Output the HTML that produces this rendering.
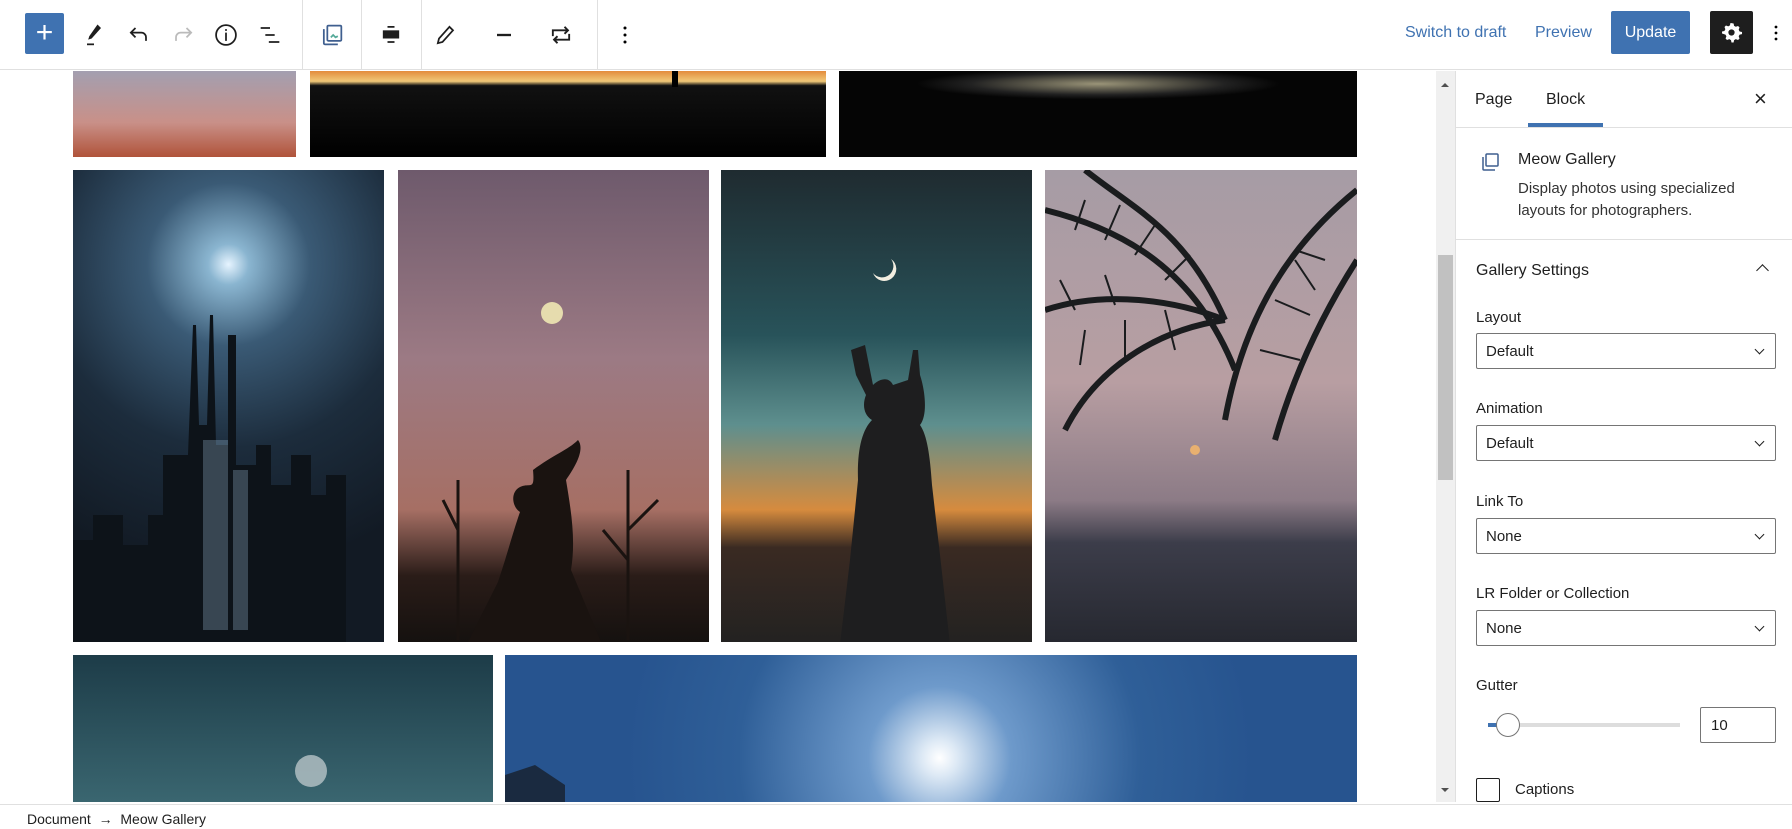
<!DOCTYPE html>
<html><head><meta charset="utf-8"><style>
*{box-sizing:border-box;margin:0;padding:0}
body{width:1792px;height:829px;overflow:hidden;background:#fff;font-family:"Liberation Sans",sans-serif;color:#1e1e1e;position:relative}
.a{position:absolute}
.top{left:0;top:0;width:1792px;height:70px;border-bottom:1px solid #e0e0e0;background:#fff}
.vd{position:absolute;top:0;width:1px;height:70px;background:#e0e0e0}
.ic{position:absolute;top:21px;width:28px;height:28px}
.img{position:absolute;overflow:hidden}
.img svg{position:absolute;left:0;top:0}
.sel{position:absolute;left:1476px;width:300px;height:36px;border:1px solid #757575;border-radius:2px;font-size:15px;padding:9px 9px}
.sel:after{content:"";position:absolute;right:12px;top:12px;width:6px;height:6px;border-right:1.5px solid #1e1e1e;border-bottom:1.5px solid #1e1e1e;transform:rotate(45deg)}
.lbl{position:absolute;left:1476px;font-size:15px}
</style></head><body>
<div class="a top"></div>
<div class="a" style="left:25px;top:13px;width:39px;height:41px;background:#3f72b1;border-radius:2px;color:#fff;font-size:30px;line-height:39px;text-align:center">+</div>
<svg class="ic" style="left:80px" viewBox="0 0 24 24"><path d="M15 3l3 3-8 9-3 1 1-3z" fill="#1e1e1e"/><path d="M6 20h6" stroke="#1e1e1e" stroke-width="1.5"/></svg>
<svg class="ic" style="left:125px" viewBox="0 0 24 24" fill="none" stroke="#1e1e1e" stroke-width="1.5"><path d="M9 6L5 10l4 4M5 10h9a4 4 0 014 4v3"/></svg>
<svg class="ic" style="left:169px" viewBox="0 0 24 24" fill="none" stroke="#bbb" stroke-width="1.5"><path d="M15 6l4 4-4 4M19 10h-9a4 4 0 00-4 4v3"/></svg>
<svg class="ic" style="left:212px" viewBox="0 0 24 24" fill="none" stroke="#1e1e1e" stroke-width="1.5"><circle cx="12" cy="12" r="8.5"/><path d="M12 10v7M12 7v1.5"/></svg>
<svg class="ic" style="left:256px" viewBox="0 0 24 24" fill="none" stroke="#1e1e1e" stroke-width="1.5"><path d="M4 6h8M8 12h8M11 18h9"/></svg>
<div class="vd" style="left:302px"></div>
<svg class="ic" style="left:318px" viewBox="0 0 24 24" fill="none" stroke="#3f5f8f" stroke-width="1.5"><rect x="8" y="4" width="12" height="13" rx="1"/><path d="M5 7v12a1 1 0 001 1h11"/><path d="M11 14l2-2 2 2 2-1" stroke="#5a9"/></svg>
<div class="vd" style="left:361px"></div>
<svg class="ic" style="left:377px" viewBox="0 0 24 24"><rect x="5" y="8" width="14" height="7" fill="#1e1e1e"/><path d="M9 5h6M9 18h6" stroke="#1e1e1e" stroke-width="1.5"/></svg>
<div class="vd" style="left:421px"></div>
<svg class="ic" style="left:432px" viewBox="0 0 24 24" fill="none" stroke="#1e1e1e" stroke-width="1.5"><path d="M15 5l3 3-9 10-4 1 1-4z"/></svg>
<svg class="ic" style="left:490px" viewBox="0 0 24 24"><path d="M6 12h12" stroke="#1e1e1e" stroke-width="2"/></svg>
<svg class="ic" style="left:547px" viewBox="0 0 24 24" fill="none" stroke="#1e1e1e" stroke-width="1.6"><path d="M5 13V8h13M15 5l3 3-3 3M19 11v5H6M9 19l-3-3 3-3"/></svg>
<div class="vd" style="left:597px"></div>
<svg class="ic" style="left:611px" viewBox="0 0 24 24"><circle cx="12" cy="6" r="1.3"/><circle cx="12" cy="12" r="1.3"/><circle cx="12" cy="18" r="1.3"/></svg>
<div class="a" style="left:1405px;top:24px;font-size:16px;color:#3f72b1">Switch to draft</div>
<div class="a" style="left:1535px;top:24px;font-size:16px;color:#3f72b1">Preview</div>
<div class="a" style="left:1611px;top:11px;width:79px;height:43px;background:#3f72b1;border-radius:2px;color:#fff;font-size:16px;line-height:43px;text-align:center">Update</div>
<div class="a" style="left:1710px;top:11px;width:43px;height:43px;background:#1e1e1e;border-radius:2px"></div>
<svg class="a" style="left:1719px;top:20px" width="25" height="25" viewBox="0 0 24 24"><path fill="#fff" d="M12 3l2 .3.5 2.3 1.6.9 2.2-.8 1.4 1.5-.8 2.2.9 1.6 2.3.5v2l-2.3.5-.9 1.6.8 2.2-1.4 1.4-2.2-.8-1.6.9-.5 2.3h-2l-.5-2.3-1.6-.9-2.2.8-1.4-1.4.8-2.2-.9-1.6L2.9 13v-2l2.3-.5.9-1.6-.8-2.2 1.4-1.4 2.2.8 1.6-.9.5-2.3zm0 6a3 3 0 100 6 3 3 0 000-6z"/></svg>
<svg class="a" style="left:1766px;top:21px" width="20" height="24" viewBox="0 0 20 24"><circle cx="10" cy="6" r="1.4"/><circle cx="10" cy="12" r="1.4"/><circle cx="10" cy="18" r="1.4"/></svg>

<!-- images -->
<div class="img" style="left:73px;top:71px;width:223px;height:86px;background:linear-gradient(#a39fb0,#c99088 60%,#b0533a)"></div>
<div class="img" style="left:310px;top:71px;width:516px;height:86px;background:linear-gradient(#e38b3c 0,#f0c878 12%,#111 17%,#000)"><svg width="516" height="86"><rect x="362" y="0" width="6" height="16" fill="#000"/></svg></div>
<div class="img" style="left:839px;top:71px;width:518px;height:86px;background:radial-gradient(ellipse 35% 18% at 50% 15%,#9a9478,#222 70%,#050505)"></div>

<div class="img" style="left:73px;top:170px;width:311px;height:472px;background:radial-gradient(circle at 50% 20%,#e6f4ff 0,#8ab5d0 5%,#3a5a75 20%,#1c2c3c 45%,#121a24 75%)">
<svg width="311" height="472"><path d="M0 472V370h20v-25h30v30h25v-30h15v-60h25l5-130h3l3 100h8l3-110h3l3 130h12v-110h8v130h20v-20h15v40h20v-30h20v40h15v-20h20V472z" fill="#0d1319"/><path d="M130 270h25v190h-25zM160 300h15v160h-15z" fill="#8aa6bc" opacity=".35"/></svg></div>

<div class="img" style="left:398px;top:170px;width:311px;height:472px;background:linear-gradient(#6e5a6c,#9c7a84 40%,#a66f64 72%,#2a1c18 86%,#15110f)">
<circle/><svg width="311" height="472"><circle cx="154" cy="143" r="11" fill="#e6dcae"/><path d="M135 300c20-15 35-20 45-30 8 10-5 30-12 40 5 30 10 60 5 90l30 72H70l30-60c10-30 15-50 22-70-8-5-10-20 0-25 10-5 15 5 13-17z" fill="#1a1310"/><path d="M230 470V300M230 360l30-30M230 390l-25-30M60 470V310M60 360l-15-30" stroke="#1a1310" stroke-width="3"/></svg></div>

<div class="img" style="left:721px;top:170px;width:311px;height:472px;background:linear-gradient(#1f2b30,#28535a 35%,#5e8f8e 54%,#d68b3e 72%,#3a2a22 80%,#232221)">
<svg width="311" height="472"><path d="M152 103a12 12 0 1018-14 10 10 0 01-18 14z" fill="#f2eee0"/><path d="M130 180l5 25 10 20c-4 10-2 20 6 25-10 10-15 30-14 60l-8 80-10 85h110l-10-90-8-70c-2-30-5-50-12-60 8-10 5-35 0-50l-2-25h-5l-5 30-15 5c-5-10-15-5-20 0l-8-40z" fill="#1e1e1f"/></svg></div>

<div class="img" style="left:1045px;top:170px;width:312px;height:472px;background:linear-gradient(#a69ca5,#b89ea2 45%,#8c7b86 70%,#3c3d4a 79%,#262830)">
<svg width="312" height="472"><circle cx="150" cy="280" r="5" fill="#e8b070"/><g stroke="#1a1c1e" stroke-width="6" fill="none"><path d="M0 40C80 60 150 100 190 200"/><path d="M0 140C60 120 130 130 180 150"/><path d="M20 260C50 200 110 160 180 150"/><path d="M312 20C250 70 200 140 180 250"/><path d="M312 90C280 140 250 200 230 270"/><path d="M40 0C90 40 140 60 180 150"/></g><g stroke="#1a1c1e" stroke-width="2"><path d="M30 60l10-30M60 70l15-35M90 85l20-30M120 110l25-25M40 160l-5 35M80 150l0 40M120 140l10 40M30 140l-15-30M70 135l-10-30M250 80l30 10M230 130l35 15M215 180l40 10M270 120l-20-30"/></g></svg></div>

<div class="img" style="left:73px;top:655px;width:420px;height:147px;background:linear-gradient(#1d3c48,#3a6670)"><svg width="420" height="147"><circle cx="238" cy="116" r="16" fill="#b8c4c8" opacity=".8"/></svg></div>
<div class="img" style="left:505px;top:655px;width:852px;height:147px;background:radial-gradient(circle at 51% 70%,#fff 0,#dde9f5 4%,#6e9acb 16%,#2f5f98 45%,#27548f 70%)"><svg width="852" height="147"><path d="M0 120l30-10 30 20v27H0z" fill="#1a2a40"/></svg></div>
<!-- scrollbar -->
<div class="a" style="left:1436px;top:71px;width:19px;height:731px;background:#f0f0f0"></div>
<div class="a" style="left:1438px;top:255px;width:15px;height:225px;background:#c1c1c1"></div>
<div class="a" style="left:1441px;top:79px;border:4px solid transparent;border-bottom:4px solid #505050"></div>
<div class="a" style="left:1441px;top:788px;border:4px solid transparent;border-top:4px solid #505050"></div>
<!-- sidebar -->
<div class="a" style="left:1455px;top:71px;width:1px;height:731px;background:#e0e0e0"></div>
<div class="a" style="left:1475px;top:91px;font-size:16px">Page</div>
<div class="a" style="left:1546px;top:91px;font-size:16px">Block</div>
<div class="a" style="left:1528px;top:123px;width:75px;height:4px;background:#3f72b1"></div>
<div class="a" style="left:1456px;top:127px;width:336px;height:1px;background:#e0e0e0"></div>
<div class="a" style="left:1754px;top:86px;font-size:22px">×</div>
<svg class="a" style="left:1478px;top:150px" width="24" height="24" viewBox="0 0 24 24" fill="none" stroke="#3f5f8f" stroke-width="1.5"><rect x="8" y="4" width="12" height="12" rx="1"/><path d="M5 7v12a1 1 0 001 1h11"/></svg>
<div class="a" style="left:1518px;top:151px;font-size:16px">Meow Gallery</div>
<div class="a" style="left:1518px;top:178px;font-size:15px;line-height:22px;color:#333">Display photos using specialized<br>layouts for photographers.</div>
<div class="a" style="left:1456px;top:239px;width:336px;height:1px;background:#e0e0e0"></div>
<div class="a" style="left:1476px;top:262px;font-size:16px">Gallery Settings</div>
<div class="a" style="left:1758px;top:266px;width:9px;height:9px;border-left:1.5px solid #1e1e1e;border-top:1.5px solid #1e1e1e;transform:rotate(45deg)"></div>
<div class="lbl" style="top:309px">Layout</div><div class="sel" style="top:333px">Default</div>
<div class="lbl" style="top:400px">Animation</div><div class="sel" style="top:425px">Default</div>
<div class="lbl" style="top:493px">Link To</div><div class="sel" style="top:518px">None</div>
<div class="lbl" style="top:585px">LR Folder or Collection</div><div class="sel" style="top:610px">None</div>
<div class="lbl" style="top:677px">Gutter</div>
<div class="a" style="left:1488px;top:723px;width:192px;height:4px;background:#ddd"></div>
<div class="a" style="left:1488px;top:723px;width:10px;height:4px;background:#3f72b1"></div>
<div class="a" style="left:1496px;top:713px;width:24px;height:24px;border-radius:50%;border:1px solid #757575;background:#fff"></div>
<div class="a" style="left:1700px;top:707px;width:76px;height:36px;border:1px solid #757575;border-radius:2px;font-size:15px;padding:9px 10px">10</div>
<div class="a" style="left:1476px;top:778px;width:24px;height:24px;border:1.5px solid #1e1e1e;border-radius:2px"></div>
<div class="lbl" style="left:1515px;top:781px">Captions</div>
<!-- footer -->
<div class="a" style="left:0;top:804px;width:1792px;height:25px;background:#fff;border-top:1px solid #e0e0e0"></div>
<div class="a" style="left:27px;top:811px;font-size:14px">Document &nbsp;→&nbsp; Meow Gallery</div>
</body></html>
